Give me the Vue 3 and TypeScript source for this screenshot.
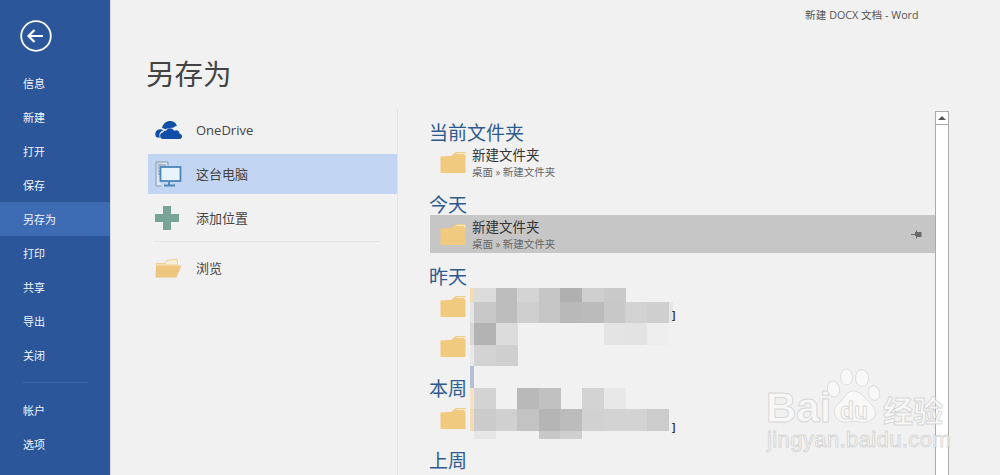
<template>
  <div class="backstage">
    <aside class="sidebar">
      <button class="back-btn" aria-label="返回">
        <svg width="32" height="32" viewBox="0 0 32 32">
          <circle cx="16" cy="16" r="14.8" fill="none" stroke="#fff" stroke-width="1.8" />
          <path d="M8.500 16H23M14.500 10L8.500 16l6 6" fill="none" stroke="#fff" stroke-width="2.200" />
        </svg>
      </button>
      <nav class="nav">
        <a v-for="item in navTop" :key="item" class="nav-item" :class="{ active: item === '另存为' }">{{ item }}</a>
        <div class="nav-divider"></div>
        <a v-for="item in navBottom" :key="item" class="nav-item">{{ item }}</a>
      </nav>
    </aside>

    <main class="content">
      <div class="window-title">新建 DOCX 文档 - Word</div>
      <h1 class="page-title">另存为</h1>

      <div class="columns">
        <section class="places">
          <div class="place">
            <svg class="place-icon" width="28" height="19" viewBox="0 0 28 19">
              <path d="M7 7.500C8.200 2.800 11.500.500 15 .500c3.400 0 6 1.900 6.900 4.900-1.700.100-3.100.900-4 2.200-1.400-.700-3.100-.500-4.400.500-1.100-.200-2.400 0-3.400.800C9.600 8.500 8.400 7.700 7 7.500z" fill="#0f4fa8" />
              <path d="M1.200 16.500C.100 14.800 0 12.500 1 11c1-1.700 3-2.600 4.800-2.300 1 .100 2 .600 2.700 1.200-2.300.300-4 2.100-4.100 4.400-.100 1 .200 2 .700 2.700H2.500c-.500 0-1-.200-1.300-.500z" fill="#0f4fa8" />
              <path d="M8 18.500c-1.900 0-2.900-1.500-2.900-3.200 0-1.700 1.200-3 2.900-3.200.500-1.300 1.700-2 3-1.700.800-1.700 2.300-2.700 4-2.700 2 0 3.400 1 4.200 2.600 1-.600 2.300-.700 3.300-.200 1.300.600 2 1.800 2.100 3.100 1.500.200 2.400 1.300 2.400 2.700 0 1.400-1 2.400-2.400 2.600z" fill="#0f4fa8" />
            </svg>
            <span>OneDrive</span>
          </div>
          <div class="place selected">
            <svg class="place-icon" width="27" height="27" viewBox="0 0 27 27">
              <path d="M1 1.500h12v3.500M1 1.500V25.500h5" fill="#dfe7f2" stroke="#8a98a8" stroke-width="1" />
              <path d="M3 4.500h8M3 7.500h3M3 10.500h3M3 13.500h3" stroke="#8a98a8" stroke-width="1" />
              <rect x="5.500" y="6.500" width="20" height="14" fill="#e8f3fb" stroke="#4d87b8" stroke-width="1.800" />
              <path d="M14 21v3M9 25h11" stroke="#4d87b8" stroke-width="1.800" />
            </svg>
            <span>这台电脑</span>
          </div>
          <div class="place">
            <svg class="place-icon" width="24" height="24" viewBox="0 0 24 24">
              <path d="M8 0h8v8h8v8h-8v8H8v-8H0V8h8z" fill="#78a597" />
            </svg>
            <span>添加位置</span>
          </div>
          <div class="place-divider"></div>
          <div class="place">
            <svg class="place-icon" width="27" height="20" viewBox="0 0 27 20">
              <path d="M1 5.500h9l2-3 10-1.500 .500 6H1z" fill="#f8efd9" stroke="#f0cf92" stroke-width="1" />
              <path d="M1 19.500C.600 19.500.400 19.200.500 18.500L1 7.500h25.500L22 18.500c-.300.700-.600 1-1.200 1z" fill="#efc680" />
            </svg>
            <span>浏览</span>
          </div>
        </section>

        <section class="recent">
          <template v-for="group in groups" :key="group.title">
            <h2 class="group-title">{{ group.title }}</h2>
            <div
              v-for="(row, i) in group.rows"
              :key="i"
              class="file-row"
              :class="{ selected: row.selected }"
            >
              <svg class="folder" width="26" height="23" viewBox="0 0 26 23">
                <path d="M.500 22V5.500L11 5 16 1h9.500v21z" fill="#f0ca7e" />
                <path d="M16.500 2.500h8.500v2" fill="none" stroke="#fbf3df" stroke-width="1" />
              </svg>
              <div v-if="row.name" class="file-text">
                <div class="file-name">{{ row.name }}</div>
                <div class="file-path">{{ row.path }}</div>
              </div>
              <svg v-if="row.selected" class="pin" width="11" height="9" viewBox="0 0 11 9">
                <path d="M0 4h4V2h1V.500h1V2h4.500v5H6v1.500H5V6H4V5H0z" fill="#6a6a6a" />
              </svg>
            </div>
          </template>
        </section>

        <div class="scrollbar">
          <div class="scroll-up"></div>
        </div>
      </div>
    </main>

    <!-- 打码 -->
    <div class="mosaic">
      <i
        v-for="(c, i) in mosaicCells"
        :key="i"
        :style="{ left: c.x + 'px', top: c.y + 'px', width: c.w + 'px', height: c.h + 'px', background: c.color }"
      ></i>
      <b class="bracket b1">]</b>
      <b class="bracket b2">]</b>
    </div>

    <!-- 水印 -->
    <div class="watermark">
      <span class="wm-bai">Bai</span>
      <svg class="wm-paw" width="54" height="56" viewBox="0 0 54 56">
        <g fill="#f8f8f8" stroke="#dedede" stroke-width="1">
          <ellipse cx="6.500" cy="21" rx="6" ry="8" transform="rotate(-12 6.500 21)" />
          <ellipse cx="19.500" cy="9" rx="6" ry="8" />
          <ellipse cx="35" cy="10" rx="6.500" ry="8.500" />
          <ellipse cx="47" cy="25" rx="5.500" ry="7.500" transform="rotate(-12 47 25)" />
          <path d="M26 23c-6 0-8 6-12 10-5 4-8 8-6 14 2 6 8 8 13 7 4-1 8-1 12 0 6 1 13-1 15-7 1-6-2-9-7-14-4-4-8-10-15-10z" />
        </g>
      </svg>
      <span class="wm-du">du</span>
      <span class="wm-jy">经验</span>
      <span class="wm-url">jingyan.baidu.com</span>
    </div>
  </div>
</template>

<script setup lang="ts">
import { computed } from 'vue'

interface FileRow {
  name?: string
  path?: string
  selected?: boolean
}

interface FileGroup {
  title: string
  rows: FileRow[]
}

interface Cell {
  x: number
  y: number
  w: number
  h: number
  color: string
}

const navTop = ['信息', '新建', '打开', '保存', '另存为', '打印', '共享', '导出', '关闭']
const navBottom = ['帐户', '选项']

const groups: FileGroup[] = [
  { title: '当前文件夹', rows: [{ name: '新建文件夹', path: '桌面 » 新建文件夹' }] },
  { title: '今天', rows: [{ name: '新建文件夹', path: '桌面 » 新建文件夹', selected: true }] },
  { title: '昨天', rows: [{}, {}] },
  { title: '本周', rows: [{}] },
  { title: '上周', rows: [] }
]

// 马赛克每行: y, 高度, 从左到右的颜色
const mosaicRows: [number, number, string[]][] = [
  [288, 14, ['#dcdcdc', '#bdbdbd', '#d4d4d4', '#c6c6c6', '#b0b0b0', '#cfcfcf', '#c9c9c9']],
  [302, 21, ['#c8c8c8', '#bdbdbd', '#cfcfcf', '#c6c6c6', '#b9b9b9', '#bbbbbb', '#c8c8c8', '#d3d3d3', '#cfcfcf']],
  [323, 22, ['#b3b3b3', '#dcdcdc', '', '', '', '', '#e4e4e4', '#e3e3e3', '#eeeeee']],
  [345, 21, ['#d3d3d3', '#cfcfcf']],
  [388, 21, ['#d3d3d3', '', '#b9b9b9', '#c1c1c1', '', '#d3d3d3', '#e8e8e8']],
  [409, 22, ['#cbcbcb', '#d0d0d0', '#c3c3c3', '#b5b5b5', '#bcbcbc', '#d1d1d1', '#d3d3d3', '#d3d3d3', '#cccccc']],
  [431, 8, ['#e6e6e6', '', '', '#c8c8c8', '#cfcfcf']]
]

const mosaicEdges: Cell[] = [
  { x: 470, y: 288, w: 4, h: 14, color: '#f5dcae' },
  { x: 470, y: 302, w: 4, h: 21, color: '#e4e4e4' },
  { x: 470, y: 323, w: 4, h: 22, color: '#d8d8d8' },
  { x: 470, y: 345, w: 4, h: 21, color: '#e8e8e8' },
  { x: 470, y: 366, w: 4, h: 22, color: '#b4bfd6' },
  { x: 470, y: 388, w: 4, h: 21, color: '#f5e3c5' },
  { x: 470, y: 409, w: 4, h: 22, color: '#f3dcb3' },
  { x: 668, y: 302, w: 5, h: 21, color: '#e6e6e6' }
]

const mosaicCells = computed<Cell[]>(() => {
  const cells: Cell[] = [...mosaicEdges]
  for (const [y, h, colors] of mosaicRows) {
    colors.forEach((color, i) => {
      if (color) cells.push({ x: 474 + Math.round(i * 21.6), y, w: 22, h, color })
    })
  }
  return cells
})
</script>

<style>
html,
body {
  margin: 0;
  background: #f1f1f1;
}
</style>

<style scoped>
.backstage {
  position: relative;
  display: flex;
  width: 1000px;
  height: 475px;
  overflow: hidden;
  background: #f1f1f1;
  font-family: "Noto Sans CJK SC", "Open Sans", sans-serif;
  color: #444;
}

.sidebar {
  flex: none;
  width: 110px;
  background: #2b579a;
  border-right: 1px solid #dcdcdc;
  color: #f2f5fa;
}

.back-btn {
  display: block;
  margin: 20px 0 0 20px;
  padding: 0;
  width: 32px;
  height: 32px;
  border: 0;
  background: none;
}

.nav {
  margin-top: 14px;
}

.nav-item {
  display: block;
  height: 34px;
  padding-left: 23px;
  font-size: 11px;
  line-height: 34px;
}

.nav-item.active {
  background: #3e6cb4;
}

.nav-divider {
  height: 1px;
  margin: 10px 22px 26px 23px;
  background: #3f69a8;
}

.nav-divider + .nav-item {
  margin-top: -16px;
}

.content {
  flex: 1;
  display: flex;
  flex-direction: column;
  min-width: 0;
}

.window-title {
  height: 30px;
  padding-left: 694px;
  font-size: 10.7px;
  line-height: 30px;
  color: #555;
  font-family: "Open Sans", "Noto Sans CJK SC", sans-serif;
  white-space: nowrap;
}

.page-title {
  margin: 0;
  height: 79px;
  box-sizing: border-box;
  padding: 28px 0 0 35px;
  font-size: 28.500px;
  font-weight: 400;
  line-height: 30px;
  color: #444;
}

.columns {
  flex: 1;
  display: flex;
  min-height: 0;
  padding-left: 37px;
}

.places {
  flex: none;
  width: 249px;
  padding-top: 1px;
  border-right: 1px solid #e3e3e3;
}

.place {
  display: flex;
  align-items: center;
  height: 40px;
  margin-bottom: 4px;
  padding: 0 0 1px 48px;
  box-sizing: border-box;
  position: relative;
  font-family: "Open Sans", "Noto Sans CJK SC", sans-serif;
  font-size: 13px;
  color: #444;
}

.place.selected {
  background: #c2d5f2;
}

.place-icon {
  position: absolute;
  left: 7px;
  top: 50%;
  transform: translateY(-50%);
}

.place-divider {
  height: 1px;
  margin: -1px 17px 6px 6px;
  background: #e4e4e4;
}

.recent {
  flex: none;
  width: 505px;
  margin-left: 32px;
}

.group-title {
  margin: 0 0 0 -1px;
  height: 34px;
  padding-top: 12px;
  box-sizing: border-box;
  font-size: 19px;
  font-weight: 400;
  line-height: 22px;
  color: #2f5a8e;
}

.file-row {
  position: relative;
  display: flex;
  align-items: center;
  height: 38px;
  padding-left: 42px;
}

.file-row + .file-row {
  margin-top: 2px;
}

.file-row.selected {
  background: #c6c6c6;
}

.folder {
  position: absolute;
  left: 10px;
  top: 8px;
}

.file-name {
  font-size: 13.500px;
  line-height: 18px;
  color: #333;
}

.file-path {
  font-size: 10.500px;
  line-height: 17px;
  color: #666;
}

.pin {
  position: absolute;
  right: 13px;
  top: 15px;
}

.scrollbar {
  flex: none;
  width: 12px;
  margin: 2px 0 0 0;
  background: #fff;
  border: 1px solid #aaa;
  border-bottom: 0;
}

.scroll-up {
  position: relative;
  height: 13px;
  box-sizing: border-box;
  border-bottom: 1px solid #aaa;
}

.scroll-up::after {
  content: "";
  position: absolute;
  left: 2px;
  top: 4px;
  border: 4px solid transparent;
  border-top: 0;
  border-bottom: 4px solid #555;
}

.mosaic {
  position: absolute;
  inset: 0;
  pointer-events: none;
}

.mosaic i {
  position: absolute;
  display: block;
}

.bracket {
  position: absolute;
  left: 672px;
  font-size: 10px;
  line-height: 12px;
  color: #333;
  font-family: "Liberation Sans", sans-serif;
}

.b1 {
  top: 310px;
}

.b2 {
  top: 422px;
}

.watermark {
  position: absolute;
  left: 0;
  top: 0;
  width: 1000px;
  height: 475px;
  pointer-events: none;
  font-family: "Liberation Sans", sans-serif;
  color: rgba(250, 250, 250, 0.75);
  -webkit-text-stroke: 1px rgba(190, 190, 190, 0.55);
}

.watermark span {
  position: absolute;
  white-space: nowrap;
}

.wm-bai {
  left: 766px;
  top: 386px;
  font-size: 42px;
  font-weight: 700;
  line-height: 44px;
}

.wm-paw {
  position: absolute;
  left: 827px;
  top: 368px;
}

.wm-du {
  left: 840px;
  top: 398px;
  font-size: 23px;
  font-weight: 700;
  line-height: 26px;
}

.wm-jy {
  left: 883px;
  top: 390px;
  font-size: 30px;
  font-weight: 700;
  line-height: 38px;
  font-family: "Noto Sans CJK SC", sans-serif;
}

.wm-url {
  left: 767px;
  top: 427px;
  font-size: 22px;
  line-height: 26px;
  letter-spacing: 0.4px;
}
</style>
